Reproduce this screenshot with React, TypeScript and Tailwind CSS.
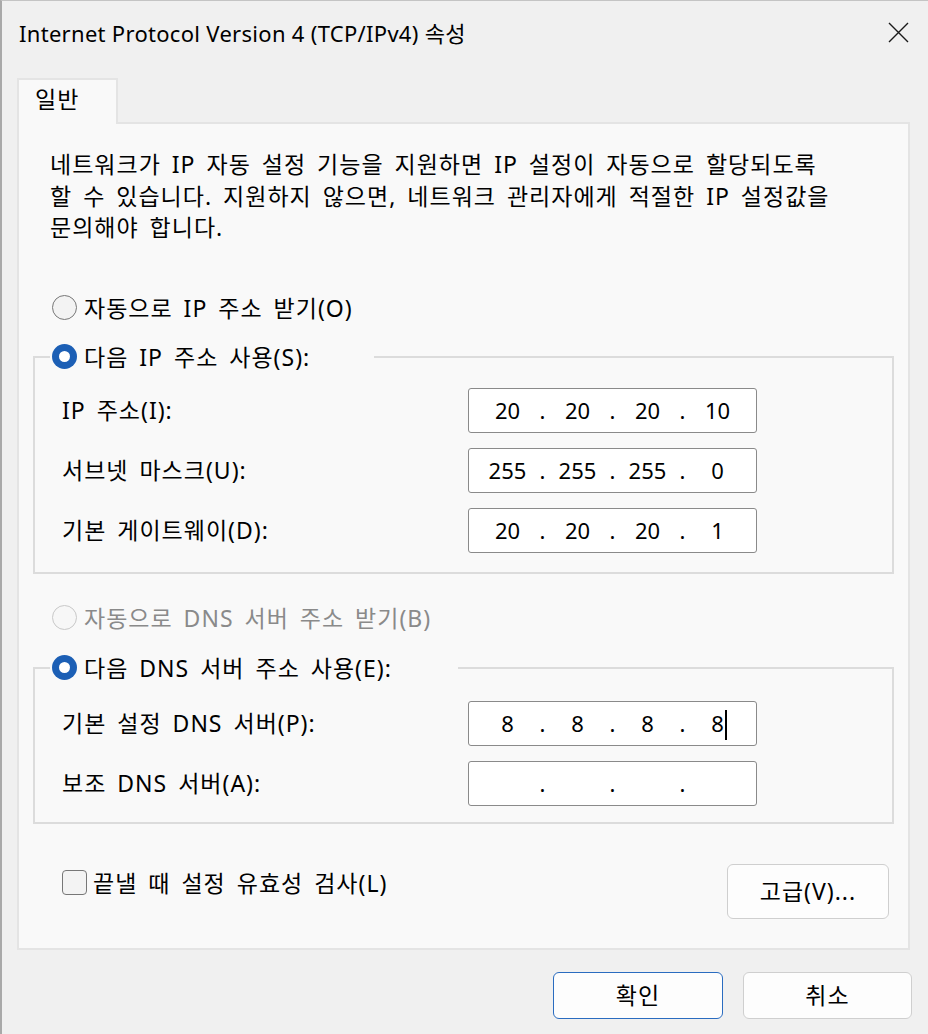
import { Fragment } from 'react';

function Radio({ label, checked, disabled }: { label: string; checked?: boolean; disabled?: boolean }) {
  return (
    <div className="flex h-[32px] items-center gap-[7px]">
      {checked ? (
        <span className="flex h-[25px] w-[25px] shrink-0 items-center justify-center rounded-full bg-[#1c5fb5]">
          <span className="h-[11px] w-[11px] rounded-full bg-white" />
        </span>
      ) : (
        <span
          className={
            disabled
              ? 'h-[25px] w-[25px] shrink-0 rounded-full border-[1.5px] border-[#c8c8c8] bg-[#f7f7f7]'
              : 'h-[25px] w-[25px] shrink-0 rounded-full border-[1.5px] border-[#777777] bg-[#f3f3f3]'
          }
        />
      )}
      <span className={disabled ? 'whitespace-nowrap text-[#8a8a8a]' : 'whitespace-nowrap text-black'}>{label}</span>
    </div>
  );
}

function IpBox({ parts, caret }: { parts: string[]; caret?: boolean }) {
  return (
    <div className="flex h-[45px] w-[289px] items-center rounded-[3px] border-[1.5px] border-[#8a8a8a] bg-white pl-[8.5px] text-[22px] tracking-normal [word-spacing:0px]">
      {parts.map((p, i) => (
        <Fragment key={i}>
          {i > 0 && <span className="w-[10px] text-center">.</span>}
          <span className="w-[60px] text-center">
            <span className="relative">
              {p}
              {caret && i === parts.length - 1 && (
                <span className="absolute -right-[3px] top-[2px] h-[30px] w-[2px] bg-black" />
              )}
            </span>
          </span>
        </Fragment>
      ))}
    </div>
  );
}

function Row({ label, parts, caret }: { label: string; parts: string[]; caret?: boolean }) {
  return (
    <div className="flex items-center">
      <span className="w-[406px] whitespace-nowrap">{label}</span>
      <IpBox parts={parts} caret={caret} />
    </div>
  );
}

function Button({ children, primary, className }: { children: string; primary?: boolean; className: string }) {
  return (
    <button
      className={`${className} flex items-center justify-center rounded-[6px] bg-[#fdfdfd] ${
        primary ? 'border-[1.5px] border-[#2a6cc0]' : 'border-[1.5px] border-[#cfcfcf]'
      }`}
    >
      {children}
    </button>
  );
}

export default function App() {
  return (
    <div className="h-[1034px] w-[928px] overflow-hidden border-l-2 border-t border-l-[#a9a9a9] border-t-[#c4c4c4] bg-[#f0f0f0] font-['Noto_Sans','Noto_Sans_CJK_KR',sans-serif] text-[23px] leading-[32px] tracking-[1px] text-black [word-spacing:4px]">
      <div className="flex h-[64px] items-center justify-between pl-[17px] pr-[19px]">
        <span className="whitespace-nowrap text-[22px] tracking-[0.3px] [word-spacing:0px]">
          Internet Protocol Version 4 (TCP/IPv4) 속성
        </span>
        <svg width="21" height="21" viewBox="0 0 21 21" className="mt-[-2px]">
          <path d="M1 1L20 20M20 1L1 20" stroke="#1a1a1a" strokeWidth="1.4" />
        </svg>
      </div>

      <div className="pl-[15px] pt-[13px]">
        <div className="relative z-10 -mb-[2px] h-[46px] w-[101px] border-2 border-b-0 border-[#e4e4e4] bg-[#f9f9f9] pl-[16px] pt-[3px]">
          일반
        </div>
        <div className="w-[893px] border-2 border-[#e4e4e4] bg-[#f9f9f9] px-[14px] pb-[29px]">
          <p className="mt-[25px] whitespace-nowrap pl-[17px] leading-[31.5px]">
            네트워크가 IP 자동 설정 기능을 지원하면 IP 설정이 자동으로 할당되도록
            <br />할 수 있습니다. 지원하지 않으면, 네트워크 관리자에게 적절한 IP 설정값을
            <br />문의해야 합니다.
          </p>

          <div className="mt-[48px] pl-[19px]">
            <Radio label="자동으로 IP 주소 받기(O)" />
          </div>

          <fieldset className="mt-[17px] border-2 border-[#dcdcdc] pb-[19px]">
            <legend className="ml-[15px] w-[324px] pl-[2px]">
              <Radio label="다음 IP 주소 사용(S):" checked />
            </legend>
            <div className="mt-[15px] flex flex-col gap-[15px] pl-[27px]">
              <Row label="IP 주소(I):" parts={['20', '20', '20', '10']} />
              <Row label="서브넷 마스크(U):" parts={['255', '255', '255', '0']} />
              <Row label="기본 게이트웨이(D):" parts={['20', '20', '20', '1']} />
            </div>
          </fieldset>

          <div className="mt-[28px] pl-[19px]">
            <Radio label="자동으로 DNS 서버 주소 받기(B)" disabled />
          </div>

          <fieldset className="mt-[18px] border-2 border-[#dcdcdc] pb-[16px]">
            <legend className="ml-[15px] w-[408px] pl-[2px]">
              <Radio label="다음 DNS 서버 주소 사용(E):" checked />
            </legend>
            <div className="mt-[17px] flex flex-col gap-[15px] pl-[27px]">
              <Row label="기본 설정 DNS 서버(P):" parts={['8', '8', '8', '8']} caret />
              <Row label="보조 DNS 서버(A):" parts={['', '', '', '']} />
            </div>
          </fieldset>

          <div className="mt-[40px] flex items-start pl-[29px] pr-[5px]">
            <div className="mt-[3px] flex h-[32px] items-center gap-[6px]">
              <span className="h-[25px] w-[25px] rounded-[4px] border-[1.5px] border-[#777777] bg-[#f3f3f3]" />
              <span className="whitespace-nowrap">끝낼 때 설정 유효성 검사(L)</span>
            </div>
            <Button className="ml-auto h-[55px] w-[162px]">고급(V)...</Button>
          </div>
        </div>
      </div>

      <div className="mt-[22px] flex justify-end gap-[20px] pr-[16px]">
        <Button primary className="h-[47px] w-[170px]">
          확인
        </Button>
        <Button className="h-[47px] w-[169px]">취소</Button>
      </div>
    </div>
  );
}
